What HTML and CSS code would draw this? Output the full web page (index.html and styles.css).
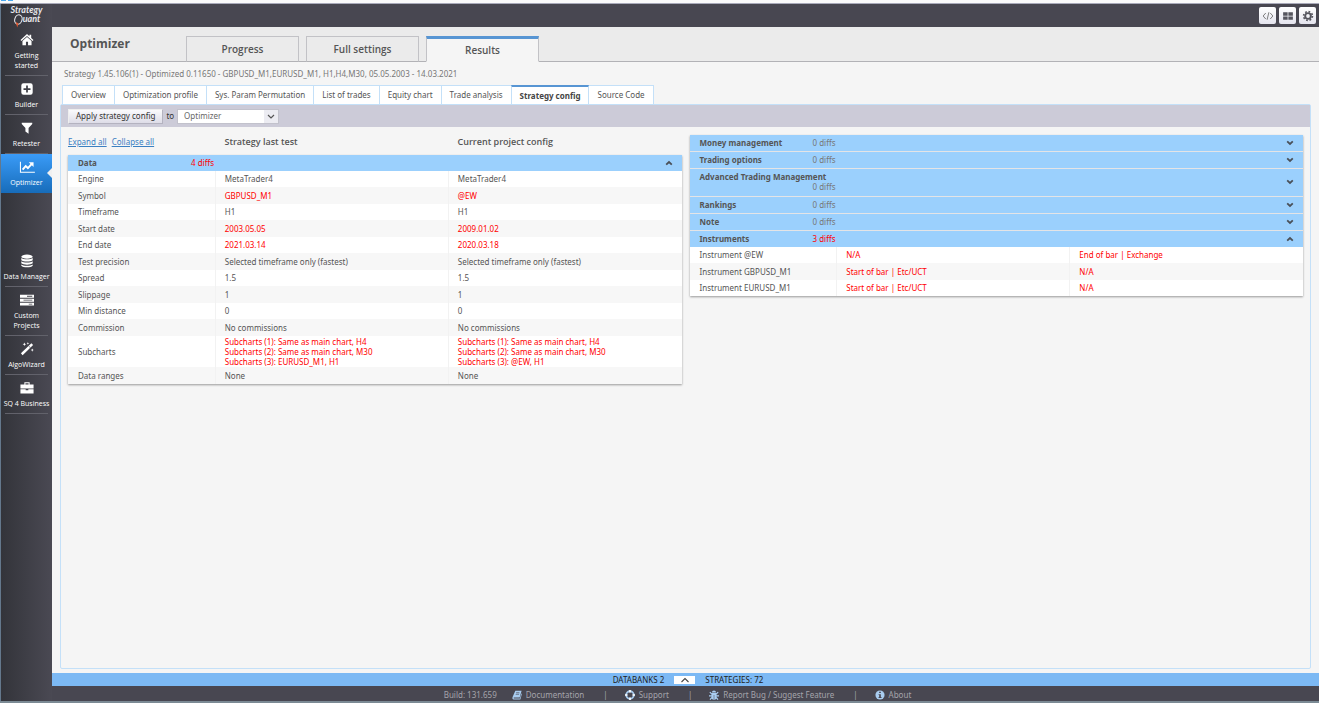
FILE: index.html
```
<!DOCTYPE html>
<html lang="en">
<head>
<meta charset="utf-8">
<title>StrategyQuant - Optimizer</title>
<link rel="stylesheet" href="styles.css">
</head>
<body>
<svg class="defs" aria-hidden="true">
  <symbol id="down" viewBox="0 0 8 6"><path d="M1.2 1.4 4 4 6.8 1.4" fill="none" stroke="currentColor" stroke-width="1.8"/></symbol>
  <symbol id="up" viewBox="0 0 8 6"><path d="M1.2 4.6 4 2 6.8 4.6" fill="none" stroke="currentColor" stroke-width="1.8"/></symbol>
</svg>
<div class="strip"><i></i><i></i></div>
<div class="app">
  <nav class="side">
    <a class="logo" href="#"><span>Strategy</span><span class="logo-row"><svg viewBox="0 0 10 14"><ellipse cx="5.4" cy="5.5" rx="3.6" ry="4.8" transform="rotate(18 5.4 5.5)" fill="none" stroke="#e8e8ec" stroke-width="1.1"/><path d="M2.800 8 5.500 9.500 4.200 13.500Z" fill="#e2562c"/></svg>uant</span></a>
    <a class="item" href="#"><svg viewBox="0 0 16 16"><path d="M8 1.2 0.6 8l1 1.1L8 3.4l6.4 5.7 1-1.1-2.6-2.4V2h-2v1.7Z"/><path d="M8 4.6 2.8 9.2V14h4v-4h2.4v4h4V9.2Z"/></svg>Getting<br>started</a>
    <a class="item" href="#"><svg viewBox="0 0 16 16"><path fill-rule="evenodd" d="M4 1.5h8A2.5 2.5 0 0 1 14.5 4v8a2.5 2.5 0 0 1-2.500 2.500H4A2.500 2.500 0 0 1 1.500 12V4A2.500 2.500 0 0 1 4 1.500ZM7 4v3H4v2h3v3h2V9h3V7H9V4Z"/></svg>Builder</a>
    <a class="item" href="#"><svg viewBox="0 0 16 16"><path d="M2 2h12v1.500L9.800 8v6.500L6.200 12V8L2 3.500Z"/></svg>Retester</a>
    <a class="item current" href="#" aria-current="page"><svg class="wide" viewBox="0 0 18 16"><path d="M1.500 2v12H18" fill="none" stroke="#fff" stroke-width="1.200"/><path d="M4 11 7.500 7l2.500 2.200L14.500 4.500" fill="none" stroke="#fff" stroke-width="2.200"/><path d="M11 2.500H16.500V8Z"/></svg>Optimizer</a>
    <span class="gap"></span>
    <a class="item" href="#"><svg viewBox="0 0 16 16"><ellipse cx="8" cy="3" rx="6.500" ry="2.400"/><path d="M1.500 4.500c2 2 11 2 13 0V7c-2 2-11 2-13 0ZM1.500 8.200c2 2 11 2 13 0v2.500c-2 2-11 2-13 0ZM1.500 12c2 2 11 2 13 0v1.500c-2 2.300-11 2.300-13 0Z"/></svg>Data Manager</a>
    <a class="item" href="#"><svg class="wide" viewBox="0 0 18 16"><path fill-rule="evenodd" d="M1 2h16v3.400H1ZM9 3.200v1h6v-1ZM1 6.500h16v3.400H1ZM5 7.700v1h10v-1ZM1 11h16v3.400H1ZM11 12.200v1h4v-1Z"/></svg>Custom<br>Projects</a>
    <a class="item" href="#"><svg viewBox="0 0 16 16"><path d="M2 14 14 2.500" stroke="#fff" stroke-width="2.800"/><path d="M9.800 4.500 12 6.700" stroke="#4a4953" stroke-width=".8"/><path d="M5 0.500l.6 1.500 1.500.5-1.500.6L5 4.600l-.6-1.500L3 2.500 4.400 2ZM9 0l.4 1.100 1.100.4-1.100.4L9 3l-.4-1.100-1.100-.4 1.100-.4ZM14 7.500l.5 1.200 1.200.4-1.200.5L14 11l-.5-1.400-1.200-.5 1.200-.4Z"/></svg>AlgoWizard</a>
    <a class="item" href="#"><svg class="wide" viewBox="0 0 18 16"><path fill-rule="evenodd" d="M6 4V1.500h6V4h4.500V8.500h-15V4ZM7.200 4h3.600V2.700H7.200Z"/><path d="M1.500 9.300H7.500v1.400h3V9.300h6v5h-15Z"/></svg>SQ 4 Business</a>
  </nav>
  <div class="page">
    <header class="top">
      <button aria-label="Code"><svg viewBox="0 0 16 16"><path d="M5 4 1.500 8 5 12M11 4l3.500 4L11 12M9.200 3 6.800 13" fill="none" stroke="#666" stroke-width="1.100"/></svg></button>
      <button aria-label="Layout"><svg viewBox="0 0 16 16"><path d="M1.500 3h6v4.500h-6ZM8.500 3h6v4.500h-6ZM1.500 8.500h6V13h-6ZM8.500 8.500h6V13h-6Z" fill="#55555e"/></svg></button>
      <button aria-label="Settings"><svg viewBox="0 0 16 16"><circle cx="8" cy="8" r="3.800" fill="none" stroke="#55555e" stroke-width="2.600"/><circle cx="8" cy="8" r="5.900" fill="none" stroke="#55555e" stroke-width="2.200" stroke-dasharray="2.300 2.330"/></svg></button>
    </header>
    <div class="band">
      <h1>Optimizer</h1>
      <div class="modes"><button>Progress</button><button>Full settings</button><button class="on">Results</button></div>
    </div>
    <main>
      <p class="strategy">Strategy 1.45.106(1) - Optimized 0.11650 - GBPUSD_M1,EURUSD_M1, H1,H4,M30, 05.05.2003 - 14.03.2021</p>
      <div class="tabs"><button>Overview</button><button>Optimization profile</button><button>Sys. Param Permutation</button><button>List of trades</button><button>Equity chart</button><button>Trade analysis</button><button class="on">Strategy config</button><button>Source Code</button></div>
      <section class="panel">
        <div class="tools">
          <button class="apply">Apply strategy config</button>
          <label for="target">to</label>
          <span class="pick"><select id="target"><option>Optimizer</option></select><svg viewBox="0 0 8 6"><path d="M1 1.500 4 4.500 7 1.500" fill="none" stroke="#555" stroke-width="1.200"/></svg></span>
        </div>
        <div class="cols">
          <div class="col">
            <div class="heads"><span class="links"><a href="#">Expand all</a><a href="#">Collapse all</a></span><h2>Strategy last test</h2><h2>Current project config</h2></div>
            <div class="box">
              <button class="acc"><b>Data</b><span class="diff red">4 diffs</span><svg><use href="#up"/></svg></button>
              <table>
                <tr><th>Engine</th><td>MetaTrader4</td><td>MetaTrader4</td></tr>
                <tr class="red"><th>Symbol</th><td>GBPUSD_M1</td><td>@EW</td></tr>
                <tr><th>Timeframe</th><td>H1</td><td>H1</td></tr>
                <tr class="red"><th>Start date</th><td>2003.05.05</td><td>2009.01.02</td></tr>
                <tr class="red"><th>End date</th><td>2021.03.14</td><td>2020.03.18</td></tr>
                <tr><th>Test precision</th><td>Selected timeframe only (fastest)</td><td>Selected timeframe only (fastest)</td></tr>
                <tr><th>Spread</th><td>1.5</td><td>1.5</td></tr>
                <tr><th>Slippage</th><td>1</td><td>1</td></tr>
                <tr><th>Min distance</th><td>0</td><td>0</td></tr>
                <tr><th>Commission</th><td>No commissions</td><td>No commissions</td></tr>
                <tr class="red tall"><th>Subcharts</th><td>Subcharts (1): Same as main chart, H4<br>Subcharts (2): Same as main chart, M30<br>Subcharts (3): EURUSD_M1, H1</td><td>Subcharts (1): Same as main chart, H4<br>Subcharts (2): Same as main chart, M30<br>Subcharts (3): @EW, H1</td></tr>
                <tr><th>Data ranges</th><td>None</td><td>None</td></tr>
              </table>
            </div>
          </div>
          <div class="col">
            <div class="box">
              <button class="acc"><b>Money management</b><span class="diff">0 diffs</span><svg><use href="#down"/></svg></button>
              <button class="acc"><b>Trading options</b><span class="diff">0 diffs</span><svg><use href="#down"/></svg></button>
              <button class="acc long"><b>Advanced Trading Management</b><span class="diff">0 diffs</span><svg><use href="#down"/></svg></button>
              <button class="acc"><b>Rankings</b><span class="diff">0 diffs</span><svg><use href="#down"/></svg></button>
              <button class="acc"><b>Note</b><span class="diff">0 diffs</span><svg><use href="#down"/></svg></button>
              <button class="acc"><b>Instruments</b><span class="diff red">3 diffs</span><svg><use href="#up"/></svg></button>
              <table>
                <tr class="red"><th>Instrument @EW</th><td>N/A</td><td>End of bar | Exchange</td></tr>
                <tr class="red"><th>Instrument GBPUSD_M1</th><td>Start of bar | Etc/UCT</td><td>N/A</td></tr>
                <tr class="red"><th>Instrument EURUSD_M1</th><td>Start of bar | Etc/UCT</td><td>N/A</td></tr>
              </table>
            </div>
          </div>
        </div>
      </section>
    </main>
    <div class="banks"><span>DATABANKS 2</span><button aria-label="Show databanks"><svg viewBox="0 0 10 6"><path d="M1.500 5 5 1.500 8.500 5" fill="none" stroke="#444" stroke-width="1.100"/></svg></button><span>STRATEGIES: 72</span></div>
    <footer>
      <span>Build: 131.659</span>
      <a href="#"><svg viewBox="0 0 12 12"><path fill-rule="evenodd" d="M4 1h7.500L9.200 9H2.500c-.8 0-.8 1.200 0 1.200h7L11.300 4l.5.800L10 11.500H2C.5 11.500.2 10 .7 8.500ZM5 3l-.2.800h4l.2-.8ZM4.500 5l-.2.800h4l.2-.8Z"/></svg>Documentation</a>
      <i>|</i>
      <a href="#"><svg viewBox="0 0 12 12"><circle cx="6" cy="6" r="4.500" fill="none" stroke="#a9cdf0" stroke-width="2.200"/><path d="M6 0v3M6 9v3M0 6h3M9 6h3" stroke="#fff" stroke-width="2"/></svg>Support</a>
      <i>|</i>
      <a href="#"><svg viewBox="0 0 12 12"><path d="M3.500 3a2.500 2.500 0 0 1 5 0ZM3 3.700h6v5a3 3 0 0 1-6 0Z"/><path d="M1 2.500 3.500 5M11 2.500 8.500 5M0 7h12M1.200 11.500 3.500 9M10.800 11.500 8.500 9" stroke="#a9cdf0" stroke-width="1.500"/><path d="M6 6v5" stroke="#484751" stroke-width=".6"/></svg>Report Bug / Suggest Feature</a>
      <i>|</i>
      <a href="#"><svg viewBox="0 0 12 12"><circle cx="6" cy="6" r="5.500"/><path d="M5 2h2v1.700H5ZM4.300 5H7v3.500h.8v1H4.300v-1H5V6h-.7Z" fill="#484751"/></svg>About</a>
    </footer>
  </div>
</div>
</body>
</html>
```
FILE: styles.css
```
* { box-sizing: border-box; }
body { margin: 0; min-height: 100vh; display: flex; flex-direction: column; font: 8px/10px "Noto Sans", sans-serif; color: #555; background: #f5f5f5; }
button, select { font: inherit; color: inherit; margin: 0; border: 0; border-radius: 0; background: none; padding: 0; }
h1, h2, p { margin: 0; }
.defs { display: none; }
.red { color: #f00; }

.strip { display: flex; gap: 2px; height: 4px; padding-left: 1px; background: #fafafa; border-bottom: 1px solid #a9aaba; }
.strip i { width: 5px; height: 1px; background: #4aa8ee; }
.app { flex: 1; display: flex; border-bottom: 2px solid #7b8a94; }

.side { width: 52px; flex: none; display: flex; flex-direction: column; border-left: 1px solid #64788c; background: linear-gradient(90deg, #33343a, #4a4953); font-family: "Open Sans", sans-serif; }
.logo { height: 23px; padding-top: 1px; color: #e8e8ec; font: italic 700 9px/9px Lato, sans-serif; text-align: center; text-decoration: none; }
.logo span { display: block; }
.logo .logo-row { display: flex; justify-content: center; }
.logo svg { width: 10px; height: 14px; }
.item { display: flex; flex-direction: column; align-items: center; position: relative; padding: 6px 0 5px; color: #fff; font-size: 7px; text-align: center; text-decoration: none; white-space: nowrap; }
.item::after { content: ""; position: absolute; bottom: 0; left: 4px; right: 4px; height: 1px; background: #62626b; }
.item svg { width: 14px; height: 14px; margin-bottom: 4px; fill: #fff; }
.item svg.wide { width: 16px; }
.current { background: linear-gradient(#3a9bf7, #176cba); }
.current::before { content: ""; position: absolute; right: 0; top: 14px; border: 5px solid transparent; border-right-color: #f0f0f0; border-left: 0; }
.current::after { display: none; }
.gap { height: 55px; }

.page { flex: 1; min-width: 0; display: flex; flex-direction: column; }
.top { height: 23px; display: flex; justify-content: flex-end; align-items: center; gap: 3px; padding-right: 3px; background: #484751; }
.top button { width: 17px; height: 17px; display: grid; place-items: center; border-radius: 2px; background: linear-gradient(#fff, #e4e4ee); }
.top svg { width: 12px; height: 12px; }

.band { display: flex; align-items: flex-end; height: 35px; background: #ebebeb; border-bottom: 1px solid #b2b2b6; font-family: "Open Sans", sans-serif; }
h1 { width: 134px; padding-left: 18px; font-size: 12px; line-height: 34px; font-weight: 700; }
.modes { display: flex; gap: 7px; margin-bottom: -1px; }
.modes button { width: 113px; height: 26px; border: 1px solid #c2c2c6; border-bottom-color: #b2b2b6; font-size: 10px; font-weight: 600; }
.modes .on { border-top: 3px solid #5795d3; border-bottom-color: #f5f5f5; background: #f5f5f5; }

main { flex: 1; display: flex; flex-direction: column; padding: 7px 8px 4px; }
.strategy { padding: 0 4px; color: #777; }
.tabs { display: flex; margin: 6px 0 0 2px; }
.tabs button { height: 19px; padding: 0 8px; border: 1px solid #c4e0f8; border-bottom: 0; margin-right: -1px; background: #fff; }
.tabs .on { position: relative; border-top: 2px solid #5795d3; font-weight: 700; color: #444; }

.panel { flex: 1; border: 1px solid #c4e0f8; border-radius: 2px; }
.tools { display: flex; align-items: center; gap: 3px; height: 22px; padding: 0 7px; background: #cccbd8; color: #333; }
.apply { height: 15px; padding: 0 7px; border: 1px solid #b4b3c0; border-top-color: #eee; border-left-color: #eee; background: linear-gradient(#fafafc, #dedde8); }
.pick { position: relative; width: 102px; height: 15px; border: 1px solid #c2c2cc; background: linear-gradient(90deg, #fff 86px, #ececf2 86px); }
.pick select { width: 100%; height: 13px; padding-left: 6px; appearance: none; color: #666; }
.pick svg { position: absolute; right: 3px; top: 3px; width: 8px; height: 7px; pointer-events: none; }

.cols { display: grid; grid-template-columns: 1fr 1fr; gap: 8px; padding: 8px 7px; align-items: start; }
.heads { display: grid; grid-template-columns: 25.5% 38% 1fr; align-items: center; height: 14px; margin-bottom: 6px; }
.links { display: flex; gap: 5px; color: #3b80c2; }
.links a { color: inherit; }
h2 { font: 600 9px/14px "Open Sans", sans-serif; }
.box { background: #e4e4e6; box-shadow: 0 1px 2px #999; }
.acc { width: 100%; min-height: 16px; display: grid; grid-template-columns: 113px 1fr auto; align-items: center; padding: 0 9px 0 10px; background: #9bd0fd; text-align: left; }
.acc + .acc { margin-top: 1px; }
.acc svg { width: 8px; height: 6px; color: #4a5058; }
.diff { color: #777; }
.diff.red { color: #f00; }
.long { padding-top: 3px; padding-bottom: 4px; }
.long b { grid-column: 1 / 3; }
.long .diff { grid-column: 2; grid-row: 2; }
.long svg { grid-column: 3; grid-row: 1 / 3; }
table { width: 100%; table-layout: fixed; border-collapse: collapse; background: #fff; }
tr { height: 16px; }
tr:nth-child(even) { height: 17px; background: #f7f7f7; }
tr.tall { height: 31px; }
th, td { padding: 0 0 0 9px; text-align: left; font-weight: 400; }
th { width: 24%; padding-left: 10px; color: #555; }
td { width: 38%; border-left: 1px solid #f2f2f2; }

.banks { display: flex; justify-content: center; align-items: center; gap: 10px; height: 13px; padding-left: 5px; background: #7cb9f4; color: #222; }
.banks button { display: grid; place-items: center; width: 21px; height: 8px; background: #fff; }
.banks svg { width: 10px; height: 6px; }
footer { display: flex; justify-content: center; align-items: center; gap: 15px; height: 15px; padding: 2px 16px 0 0; background: #484751; color: #a4a4ab; }
footer a { display: flex; align-items: center; gap: 4px; color: inherit; text-decoration: none; }
footer i { font-style: normal; margin: 0 2px 0 4px; }
footer svg { width: 10px; height: 10px; fill: #a9cdf0; }
```
